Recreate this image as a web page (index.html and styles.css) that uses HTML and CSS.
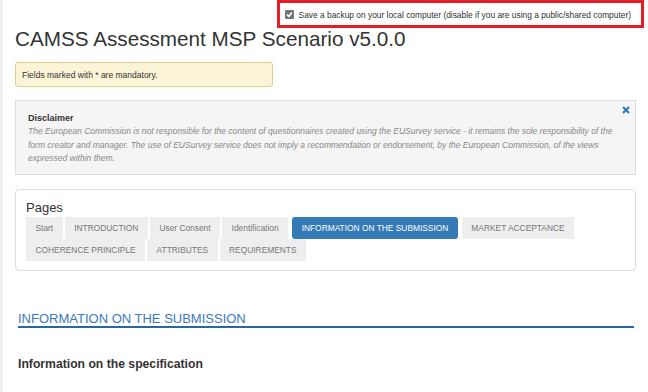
FILE: index.html
```html
<!DOCTYPE html>
<html lang="en">
<head>
    <meta charset="UTF-8">
    <meta name="viewport" content="width=device-width, initial-scale=1.0">
    <title>CAMSS Assessment MSP Scenario v5.0.0</title>
    <link rel="stylesheet" href="styles.css">
</head>

<body>
    <div class="topbar">
        <label class="backup">
            <span class="check">
                <svg width="9" height="9" viewBox="0 0 9 9"><path d="M2 4.6 L3.8 6.3 L7 2.6" fill="none" stroke="#fff" stroke-width="1.5"/></svg>
            </span>
            Save a backup on your local computer (disable if you are using a public/shared computer)
        </label>
    </div>

    <div class="page">
        <h1 class="title">CAMSS Assessment MSP Scenario v5.0.0</h1>

        <div class="mandatory">Fields marked with * are mandatory.</div>

        <div class="disclaimer">
            <span class="close-disclaimer">
                <svg width="8" height="8" viewBox="0 0 8 8"><path d="M1 1 L7 7 M7 1 L1 7" stroke="#337ab7" stroke-width="2.2"/></svg>
            </span>
            <div class="disclaimer-title">Disclaimer</div>
            <p>The European Commission is not responsible for the content of questionnaires created using the EUSurvey service - it remains the sole responsibility of the form creator and manager. The use of EUSurvey service does not imply a recommendation or endorsement, by the European Commission, of the views expressed within them.</p>
        </div>

        <div class="pages">
            <div class="pages-title">Pages</div>
            <div class="tabs">
                <span class="tab">Start</span>
                <span class="tab">INTRODUCTION</span>
                <span class="tab">User Consent</span>
                <span class="tab">Identification</span>
                <span class="tab active">INFORMATION ON THE SUBMISSION</span>
                <span class="tab">MARKET ACCEPTANCE</span>
                <span class="tab">COHERENCE PRINCIPLE</span>
                <span class="tab">ATTRIBUTES</span>
                <span class="tab">REQUIREMENTS</span>
            </div>
        </div>

        <h2 class="section">INFORMATION ON THE SUBMISSION</h2>

        <h3 class="question">Information on the specification</h3>
    </div>
</body>
</html>
```

FILE: styles.css
```css
body {
    margin: 0;
    border-left: 3px solid #eeeeee;
    min-height: 392px;
    box-sizing: border-box;
    font-family: "Liberation Sans", Arial, sans-serif;
    color: #333;
    background: #fff;
}
.topbar {
    display: flex;
    justify-content: flex-end;
    padding-right: 4px;
}
.backup {
    display: flex;
    align-items: center;
    gap: 5px;
    height: 28px;
    box-sizing: border-box;
    border: 3px solid #e41e26;
    padding: 1px 10px 0 5px;
    font-size: 8.4px;
    color: #333;
}
.check {
    display: flex;
    width: 9px;
    height: 9px;
    background: #767676;
    border-radius: 1px;
}
.page {
    padding: 0 12px 0 12px;
}
.title {
    margin: 0;
    font-size: 20.7px;
    line-height: 22px;
    font-weight: normal;
    color: #333;
}
.mandatory {
    margin-top: 12px;
    width: 258px;
    height: 25px;
    box-sizing: border-box;
    padding: 0 6px;
    display: flex;
    align-items: center;
    background: #fcf4d6;
    border: 1px solid #dccd9b;
    border-radius: 3px;
    font-size: 8.5px;
}
.disclaimer {
    position: relative;
    margin-top: 13px;
    height: 75px;
    box-sizing: border-box;
    padding: 11px 12px 0 12px;
    background: #f5f5f5;
    border: 1px solid #dddddd;
}
.disclaimer-title {
    font-size: 9px;
    font-weight: bold;
    line-height: 13px;
}
.disclaimer p {
    margin: 0;
    font-size: 8.5px;
    line-height: 13.5px;
    font-style: italic;
    color: #888;
}
.close-disclaimer {
    position: absolute;
    top: 5px;
    right: 5px;
    display: flex;
}
.pages {
    margin-top: 14px;
    border: 1px solid #dddddd;
    border-radius: 4px;
    padding: 10px 10px 9px 10px;
}
.pages-title {
    font-size: 13px;
    line-height: 15px;
    margin-bottom: 2px;
}
.tabs {
    display: flex;
    flex-wrap: wrap;
    column-gap: 2px;
}
.tab {
    height: 22px;
    line-height: 22px;
    padding: 0 9.5px;
    background: #eeeeee;
    color: #777;
    font-size: 8.4px;
}
.tab.active {
    background: #337ab7;
    color: #fff;
    border-radius: 3px;
    margin: 0 2px;
}
.section {
    margin: 40px 2px 0 3px;
    padding-bottom: 0;
    border-bottom: 2px solid #2a66a0;
    font-size: 13px;
    line-height: 15px;
    font-weight: normal;
    color: #3a7abd;
}
.question {
    margin: 29px 0 0 3px;
    font-size: 12.2px;
    line-height: 14px;
    font-weight: bold;
    color: #333;
}
```
